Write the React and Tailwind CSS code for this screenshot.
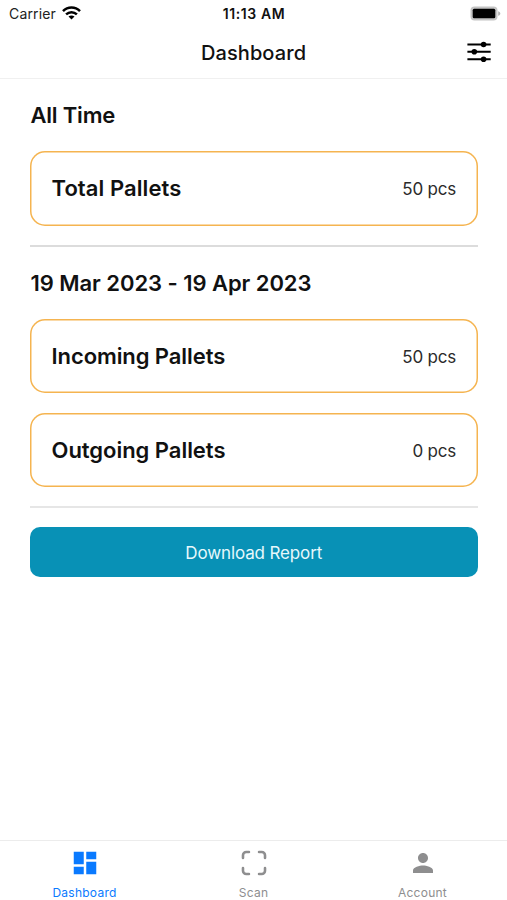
function Wifi() {
  return (
    <svg width="19" height="14" viewBox="0 0 19 14" fill="none" stroke="#000" strokeWidth="2.5">
      <path d="M1 5.2C5.8.3 13.2.3 18 5.2" />
      <path d="M4.1 8.4c3.1-3 7.700-3 10.800 0" />
      <path d="M9.500 13.500L6.500 10.500c1.700-1.500 4.300-1.500 6 0z" fill="#000" stroke="none" />
    </svg>
  );
}

function Battery() {
  return (
    <svg width="31" height="15" viewBox="0 0 31 15">
      <rect x="0.500" y="0.500" width="27" height="14" rx="4" fill="#c4c4c4" />
      <rect x="2.700" y="2.700" width="22.600" height="9.600" rx="1.500" fill="#000" />
      <path d="M28.200 5.200c2.800 1 2.800 3.600 0 4.600z" fill="#b0b0b0" />
    </svg>
  );
}

function Sliders() {
  return (
    <svg width="24" height="22" viewBox="0 0 24 22" fill="#000" stroke="#000">
      <path d="M.4 3.500h23.300M.4 10.800h23.300M.4 18.200h23.300" strokeWidth="2" />
      <g stroke="none">
        <circle cx="16.600" cy="3.500" r="2.800" />
        <circle cx="7.300" cy="10.800" r="2.800" />
        <circle cx="16.600" cy="18.200" r="2.800" />
      </g>
    </svg>
  );
}

function Card({ title, value, titleClass }) {
  return (
    <div className="flex h-[74.5px] items-center justify-between rounded-[15px] pl-[21.5px] pr-[21.5px] shadow-[inset_0_0_0_1.5px_#f5b450]">
      <span className={`text-[22px] font-semibold leading-7 ${titleClass}`}>{title}</span>
      <span className="pt-[2px] text-[17px] leading-6 tracking-[-0.2px] text-[#2b2b2b]">{value}</span>
    </div>
  );
}

function Tab({ label, className, children }) {
  return (
    <div className={`flex flex-1 flex-col items-center pt-[6.5px] ${className}`}>
      {children}
      <span className="mt-[7.5px] shrink-0 text-[12px] leading-4 tracking-[0.25px]">{label}</span>
    </div>
  );
}

export default function App() {
  return (
    <div className="flex h-[900px] w-[507px] flex-col overflow-hidden bg-white font-['Inter',sans-serif] text-[#111]">
      <div className="grid h-[26px] grid-cols-3 items-center pl-[9px] pr-[6px] text-[14px] leading-5">
        <div className="flex items-center gap-[6px] text-[#222]">
          <span className="pt-[2px] tracking-[0.15px]">Carrier</span>
          <Wifi />
        </div>
        <span className="pr-[2px] pt-[2px] text-center text-[14px] font-semibold tracking-[0.6px]">11:13 AM</span>
        <div className="flex justify-end">
          <Battery />
        </div>
      </div>
      <header className="grid h-[53px] grid-cols-[1fr_auto_1fr] items-center border-b border-[#f0f0f0] px-4 pb-px">
        <span />
        <h1 className="pt-[2px] text-[20px] font-medium leading-7 tracking-[0.1px]">Dashboard</h1>
        <div className="flex justify-end">
          <Sliders />
        </div>
      </header>
      <main className="flex flex-1 flex-col pl-[30px] pr-[29.5px] pt-[22px]">
        <h2 className="mb-[22px] pl-[0.5px] text-[22px] font-semibold leading-7 tracking-[-0.2px]">All Time</h2>
        <Card title="Total Pallets" value="50 pcs" titleClass="tracking-[0.08px]" />
        <div className="mt-[19.5px] h-[1.5px] bg-[#dcdcdc]" />
        <h2 className="mb-[22px] mt-[22px] pl-[0.5px] text-[22px] font-semibold leading-7 tracking-[-0.05px]">
          19 Mar 2023 - 19 Apr 2023
        </h2>
        <div className="flex flex-col gap-[19.5px]">
          <Card title="Incoming Pallets" value="50 pcs" titleClass="tracking-[-0.08px]" />
          <Card title="Outgoing Pallets" value="0 pcs" titleClass="tracking-[-0.03px]" />
        </div>
        <div className="mt-[19px] h-[2px] bg-[#e6e6e6]" />
        <button className="mt-[19px] h-[50px] rounded-[10px] bg-[#0891b6] pt-[3px] text-[17px] tracking-[-0.13px] text-[#e6f8fc]">
          Download Report
        </button>
      </main>
      <nav className="flex h-[60px] shrink-0 border-t border-[#ececec]">
        <Tab label="Dashboard" className="text-[#0a7aff]">
          <svg className="shrink-0" width="30" height="30" viewBox="0 0 24 24" fill="currentColor">
            <path d="M3 13h8V3H3v10zm0 8h8v-6H3v6zm10 0h8V11h-8v10zm0-18v6h8V3h-8z" />
          </svg>
        </Tab>
        <Tab label="Scan" className="text-[#8e8e8f]">
          <svg className="shrink-0" width="30" height="30" viewBox="0 0 512 512" fill="none" stroke="currentColor" strokeWidth="44" strokeLinecap="round">
            <path d="M342 444h46a56 56 0 0 0 56-56v-46M444 170v-46a56 56 0 0 0-56-56h-46M170 444h-46a56 56 0 0 1-56-56v-46M68 170v-46a56 56 0 0 1 56-56h46" />
          </svg>
        </Tab>
        <Tab label="Account" className="text-[#8e8e8f]">
          <svg className="shrink-0" width="30" height="30" viewBox="0 0 24 24" fill="currentColor">
            <path d="M12 12c2.210 0 4-1.790 4-4s-1.790-4-4-4-4 1.790-4 4 1.790 4 4 4zm0 2c-2.670 0-8 1.340-8 4v2h16v-2c0-2.660-5.330-4-8-4z" />
          </svg>
        </Tab>
      </nav>
    </div>
  );
}
